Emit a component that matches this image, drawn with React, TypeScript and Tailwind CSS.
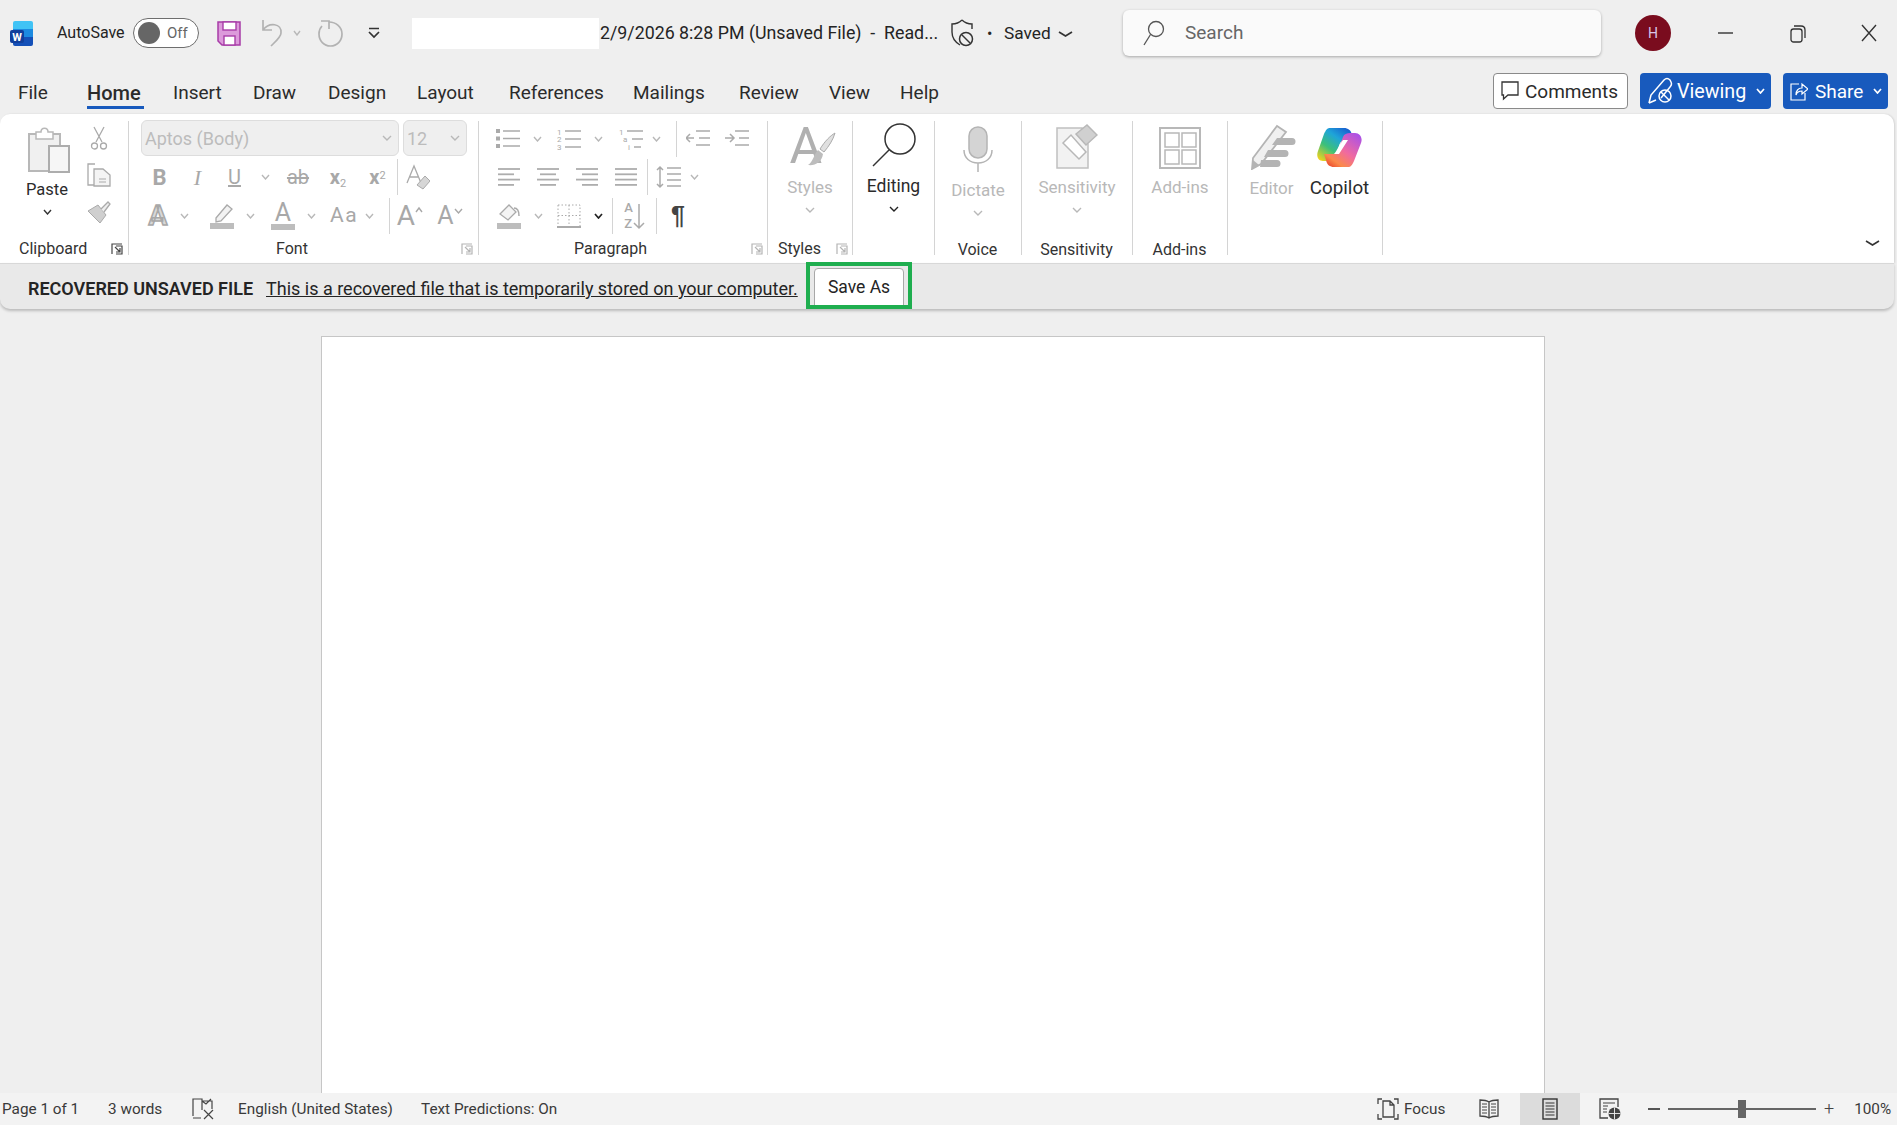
import React from "react";

const G = "#b4b4b4";

const S = ({ w, h, children, className = "" }: { w: number; h: number; children?: React.ReactNode; className?: string }) => (
  <svg width={w} height={h} viewBox={`0 0 ${w} ${h}`} fill="none" className={"block shrink-0 " + className}>
    {children}
  </svg>
);

const Chev = ({ c = "#b8b8b8", w = 10, sw = 1.4 }: { c?: string; w?: number; sw?: number }) => (
  <S w={w} h={6}>
    <path d={`M1 1 L${w / 2} 5 L${w - 1} 1`} stroke={c} strokeWidth={sw} />
  </S>
);

const Slot = ({ w, className = "", children }: { w: string; className?: string; children?: React.ReactNode }) => (
  <div className={"flex items-center justify-center shrink-0 h-full " + w + " " + className}>{children}</div>
);

const Sep = ({ className = "" }: { className?: string }) => <div className={"w-px h-[36px] bg-[#d4d4d4] shrink-0 " + className} />;

const Launcher = ({ c = G }: { c?: string }) => (
  <S w={12} h={12}>
    <path d="M1 11 V1 H11 M5 3 H11 V11 H5 M4 4 L9 9 M9 5 V9 H5" stroke={c} strokeWidth="1.2" />
  </S>
);

const Lines = ({ xs }: { xs: [number, number][] }) => (
  <S w={24} h={22}>
    {xs.map((a, i) => (
      <path key={i} d={`M${a[0]} ${3 + i * 5.3} H${a[1]}`} stroke="#adadad" strokeWidth="1.8" />
    ))}
  </S>
);

function WordLogo() {
  return (
    <S w={24} h={25}>
      <rect x="3" y="0" width="20" height="12" rx="2" fill="#41c3f5" />
      <rect x="3" y="8" width="20" height="9" fill="#1c8ae0" />
      <path d="M3 16 H23 V23 a2 2 0 0 1 -2 2 H5 a2 2 0 0 1 -2 -2Z" fill="#1450b8" />
      <rect x="0" y="9" width="14" height="13" rx="2" fill="#103f9c" />
      <text x="7" y="19.5" fontSize="11" fontWeight="700" textAnchor="middle" fill="#fff" fontFamily="Roboto">W</text>
    </S>
  );
}

function TitleBar() {
  return (
    <div className="h-[66px] flex items-center shrink-0 text-[#242424]">
      <div className="ml-[10px]"><WordLogo /></div>
      <span className="ml-[23px] text-[16px] w-[66px] whitespace-nowrap">AutoSave</span>
      <div className="ml-[10px] w-[66px] h-[30px] rounded-full border border-[#6e6e6e] bg-white flex items-center pl-[4px] gap-[7px]">
        <div className="w-[22px] h-[22px] rounded-full bg-[#666]" />
        <span className="text-[15px] text-[#666]">Off</span>
      </div>
      <div className="ml-[18px]">
        <S w={24} h={25}>
          <path d="M1 1 H23 V24 H5 L1 20Z" fill="#dc9adb" stroke="#a83ca8" strokeWidth="1.5" />
          <rect x="6" y="1" width="13" height="8" fill="#fff" stroke="#a83ca8" strokeWidth="1.4" />
          <rect x="7" y="15" width="11" height="9" fill="#fff" stroke="#a83ca8" strokeWidth="1.4" />
        </S>
      </div>
      <div className="ml-[20px]">
        <S w={22} h={28}>
          <path d="M2 1 V11 H11 M2 11 C8 3 21 4 20 14 C20 18 15 22 10 27" stroke="#b2b2b2" strokeWidth="1.7" />
        </S>
      </div>
      <div className="ml-[10px]"><Chev w={8} /></div>
      <div className="ml-[17px]">
        <S w={25} h={28}>
          <path d="M3 2 H11 V10" stroke="#b2b2b2" strokeWidth="1.7" />
          <path d="M11 3 C18 3 24 8 24 15 C24 22 19 27 12.500 27 C6 27 1 22 1 15 C1 12 2 9 4 7" stroke="#b2b2b2" strokeWidth="1.7" />
        </S>
      </div>
      <div className="ml-[24px]">
        <S w={14} h={12}>
          <path d="M2 1.500 H12" stroke="#333" strokeWidth="1.500" />
          <path d="M2 5 L7 10 L12 5" stroke="#333" strokeWidth="1.700" />
        </S>
      </div>
      <div className="ml-[31px] w-[187px] h-[31px] bg-white" />
      <span className="ml-[1px] w-[339px] text-[17.800px] whitespace-pre mt-[1px]">2/9/2026 8:28 PM (Unsaved File)  -  Read...</span>
      <div className="ml-[11px]">
        <S w={24} h={28}>
          <path d="M12 1 C9 4 5 5 2 5 V13 C2 19 5 23 10 26" stroke="#333" strokeWidth="1.400" />
          <path d="M12 1 C15 4 19 5 22 5 V10" stroke="#333" strokeWidth="1.400" />
          <circle cx="16" cy="20" r="6.500" stroke="#333" strokeWidth="1.500" />
          <path d="M12 16 L20 24" stroke="#333" strokeWidth="1.500" />
        </S>
      </div>
      <span className="ml-[13px] text-[16px] w-[7px] mt-[1px]">•</span>
      <span className="ml-[10px] text-[17.300px] w-[48px] mt-[2px]">Saved</span>
      <div className="ml-[6px] mt-[1px]"><Chev c="#333" w={15} sw={1.7} /></div>
      <div className="ml-[50px] w-[478px] h-[46px] rounded-md bg-[#fafafa] shadow-[0_1px_3px_rgba(0,0,0,0.3)] flex items-center pl-[20px]">
        <S w={22} h={26}>
          <circle cx="13" cy="9" r="7.500" stroke="#555" strokeWidth="1.300" />
          <path d="M7.500 14.500 L1 25" stroke="#555" strokeWidth="1.300" />
        </S>
        <span className="ml-[20px] text-[19px] text-[#666] mt-[1px]">Search</span>
      </div>
      <div className="ml-[34px] w-[36px] h-[36px] rounded-full bg-[#7a0c1e] text-[#d8c6e8] text-[14px] flex items-center justify-center">H</div>
      <div className="ml-[47px]"><S w={15} h={2}><path d="M0 1 H15" stroke="#333" strokeWidth="1.400" /></S></div>
      <div className="ml-[57px]">
        <S w={16} h={19}>
          <rect x="1" y="5" width="11" height="13" rx="2.500" stroke="#333" strokeWidth="1.300" />
          <path d="M4 2 H11 C13.500 2 15 3.500 15 6 V14" stroke="#333" strokeWidth="1.300" />
        </S>
      </div>
      <div className="ml-[55px]"><S w={16} h={18}><path d="M1 1 L15 17 M15 1 L1 17" stroke="#333" strokeWidth="1.400" /></S></div>
    </div>
  );
}

const tabs: [string, string, string][] = [
  ["File", "ml-[18px]", "w-[29px]"],
  ["Home", "ml-[40px]", "w-[57px]"],
  ["Insert", "ml-[29px]", "w-[47px]"],
  ["Draw", "ml-[33px]", "w-[44px]"],
  ["Design", "ml-[31px]", "w-[59px]"],
  ["Layout", "ml-[30px]", "w-[59px]"],
  ["References", "ml-[33px]", "w-[92px]"],
  ["Mailings", "ml-[32px]", "w-[74px]"],
  ["Review", "ml-[32px]", "w-[59px]"],
  ["View", "ml-[31px]", "w-[41px]"],
  ["Help", "ml-[30px]", "w-[40px]"],
];

function TabRow() {
  return (
    <div className="h-[48px] shrink-0 flex items-start pt-[7px]">
      <div className="flex items-start mt-[8px]">
        {tabs.map(([t, m, w]) => (
          <div
            key={t}
            className={
              m + " " + w +
              " h-[28px] leading-[24px] text-[#2b2b2b] whitespace-nowrap box-border border-b-[3px] " +
              (t === "Home" ? "border-[#185abd] font-medium text-[20px]" : "border-transparent text-[19px]")
            }
          >
            {t}
          </div>
        ))}
      </div>
      <div className="ml-auto flex mr-[9px] gap-[12px]">
        <div className="h-[36px] w-[135px] rounded-[4px] border border-[#8a8a8a] bg-white flex items-center pl-[7px] gap-[6px] text-[19px] text-[#2b2b2b]">
          <S w={18} h={20}>
            <path d="M1 1 H17 V14 H7 L2.500 18 V14 H1Z" stroke="#333" strokeWidth="1.300" />
          </S>
          <span className="mt-[2px]">Comments</span>
        </div>
        <div className="h-[36px] w-[131px] rounded-[4px] bg-[#185abd] flex items-center pl-[7px] text-[19.700px] text-white">
          <S w={28} h={28}>
            <path d="M2 26 L4 18 L17 3 C19 1 21 1 23 3 L24 5 C25 7 24 9 23 10 L14 21" stroke="#fff" strokeWidth="1.500" />
            <path d="M2 26 L9 23" stroke="#fff" strokeWidth="1.500" />
            <circle cx="18" cy="19" r="6" stroke="#fff" strokeWidth="1.500" />
            <path d="M14 15 L22 23" stroke="#fff" strokeWidth="1.500" />
          </S>
          <span className="ml-[2px] w-[69px] mt-[2px]">Viewing</span>
          <div className="ml-[10px]"><Chev c="#fff" w={9} sw={1.7} /></div>
        </div>
        <div className="h-[36px] w-[105px] rounded-[4px] bg-[#185abd] flex items-center pl-[7px] text-[19px] text-white">
          <S w={18} h={20}>
            <path d="M9 3 H1 V19 H15 V12" stroke="#fff" strokeWidth="1.200" />
            <path d="M6 14 C6 9 9 7 12 7 V3 L18 8 L12 13 V10 C9 10 7 11 6 14Z" stroke="#fff" strokeWidth="1.200" />
          </S>
          <span className="ml-[7px] w-[50px] mt-[2px]">Share</span>
          <div className="ml-[8px]"><Chev c="#fff" w={9} sw={1.7} /></div>
        </div>
      </div>
    </div>
  );
}

const Group = ({ w, label, launcher, lc, children, labelClass = "" }: { w: string; label?: string; launcher?: string; lc?: string; children: React.ReactNode; labelClass?: string }) => (
  <div className={"h-[134px] border-r border-[#d4d4d4] flex flex-col shrink-0 box-border " + w}>
    <div className="flex-1 min-h-0">{children}</div>
    {label && (
      <div className={"h-[14px] leading-[14px] flex items-center text-[16px] text-[#333] whitespace-nowrap translate-y-[1px] " + labelClass}>
        <span>{label}</span>
        {launcher && <div className={launcher}><Launcher c={lc} /></div>}
      </div>
    )}
  </div>
);

const Dim = "text-[#b8b8b8]";

function Clipboard() {
  return (
    <Group w="w-[129px]" label="Clipboard" launcher="ml-[24px]" lc="#444" labelClass="pl-[19px]">
      <div className="flex">
        <div className="w-[94px] flex flex-col items-center pt-[6px]">
          <div className="pl-[4px]">
            <S w={42} h={46}>
              <rect x="1" y="7" width="31" height="37" fill="#f0f0f0" stroke="#b8b8b8" strokeWidth="2" />
              <path d="M8 12 V5 H13 C13 0 20 0 20 5 H25 V12Z" fill="#fff" stroke="#b8b8b8" strokeWidth="1.500" />
              <rect x="21" y="19" width="20" height="26" fill="#f6f6f6" stroke="#adadad" strokeWidth="2" />
            </S>
          </div>
          <span className="text-[16.500px] leading-[22px] mt-[6px] text-[#2b2b2b]">Paste</span>
          <div className="mt-[8px]"><Chev c="#333" w={9} /></div>
        </div>
        <div className="w-[24px] -ml-[7px] flex flex-col items-center pt-[5px] gap-[13px]">
          <S w={18} h={24}>
            <path d="M4 1 L12 16 M14 1 L6 16" stroke="#aaa" strokeWidth="1.300" />
            <circle cx="4.500" cy="20" r="3" stroke="#aaa" strokeWidth="1.300" />
            <circle cx="13.500" cy="20" r="3" stroke="#aaa" strokeWidth="1.300" />
          </S>
          <S w={24} h={24}>
            <path d="M8 22 H1 V1 H8" stroke="#aaa" strokeWidth="1.300" />
            <path d="M7 6 H16 L23 12 V23 H7Z" fill="#f4f4f4" stroke="#aaa" strokeWidth="1.300" />
            <path d="M12 16 H19 M12 19 H19" stroke="#aaa" strokeWidth="1" />
          </S>
          <S w={24} h={24}>
            <path d="M1 11 L11 5 L19 15 L13 23Z" fill="#cfcfcf" stroke="#aaa" />
            <path d="M14 9 L21 2 L23 4 L17 12" fill="#eee" stroke="#aaa" strokeWidth="1.300" />
          </S>
        </div>
      </div>
    </Group>
  );
}

const Drop = ({ w, t, cls }: { w: string; t: string; cls: string }) => (
  <div className={"h-[36px] rounded-[6px] border border-[#dddddd] bg-[#efefef] flex items-center justify-between box-border " + w + " " + cls}>
    <span className="text-[18px] text-[#bcbcbc] whitespace-nowrap">{t}</span>
    <Chev w={10} />
  </div>
);

function Font() {
  return (
    <Group w="w-[350px]" label="Font" launcher="ml-[153px]" labelClass="pl-[147px]">
      <div className="pl-[12px]">
        <div className="flex h-[36px] gap-[4px] -mt-[1px]">
          <Drop w="w-[258px]" t="Aptos (Body)" cls="pl-[3px] pr-[6px]" />
          <Drop w="w-[64px]" t="12" cls="pl-[3px] pr-[6px]" />
        </div>
        <div className="flex items-center h-[38px] mt-[2px]">
          <Slot w="w-[37px]"><span className="text-[22px] font-bold text-[#a8a8a8]">B</span></Slot>
          <Slot w="w-[39px]"><span className="text-[22px] italic text-[#a8a8a8] [font-family:'Liberation_Serif',serif]">I</span></Slot>
          <Slot w="w-[35px]"><span className="text-[20px] underline text-[#a8a8a8]">U</span></Slot>
          <Slot w="w-[26px]"><Chev w={9} /></Slot>
          <Slot w="w-[40px]"><span className="text-[20px] line-through text-[#a8a8a8]">ab</span></Slot>
          <Slot w="w-[40px]"><span className="text-[20px] font-bold text-[#a8a8a8]">x<sub className="text-[11px] font-normal">2</sub></span></Slot>
          <Slot w="w-[39px]"><span className="text-[20px] font-bold text-[#a8a8a8]">x<sup className="text-[11px] font-normal">2</sup></span></Slot>
          <Sep />
          <Slot w="w-[40px]">
            <S w={24} h={26}>
              <path d="M1 19 L8 2 L15 19 M4 13 H12" stroke="#aaa" strokeWidth="1.300" />
              <path d="M11 21 L19 12 L24 17 L17 25Z" fill="#d6d6d6" stroke="#aaa" />
            </S>
          </Slot>
        </div>
        <div className="flex items-center h-[38px] mt-[1px]">
          <Slot w="w-[34px]"><span className="text-[28px] font-bold text-[#d8d8d8] [-webkit-text-stroke:1.500px_#a8a8a8]">A</span></Slot>
          <Slot w="w-[18px]"><Chev w={9} /></Slot>
          <Slot w="w-[40px]" className="ml-[9px]">
            <S w={24} h={26}>
              <path d="M6 15 L17 2 L22 6 L11 18 L6 19Z" fill="#f2f2f2" stroke="#aaa" strokeWidth="1.300" />
              <rect x="0" y="20" width="24" height="6" fill="#bdbdbd" />
            </S>
          </Slot>
          <Slot w="w-[16px]"><Chev w={9} /></Slot>
          <Slot w="w-[40px]" className="ml-[5px] flex-col">
            <span className="text-[25px] leading-[22px] text-[#a8a8a8]">A</span>
            <div className="w-[24px] h-[6px] bg-[#bdbdbd]" />
          </Slot>
          <Slot w="w-[16px]"><Chev w={9} /></Slot>
          <Slot w="w-[36px]" className="ml-[7px]"><span className="text-[21px] text-[#a8a8a8] tracking-[1.500px]">Aa</span></Slot>
          <Slot w="w-[14px]"><Chev w={9} /></Slot>
          <div className="ml-[13px]"><Sep /></div>
          <Slot w="w-[40px]">
            <span className="text-[28px] leading-[30px] text-[#a8a8a8]">A</span>
            <S w={8} h={22}><path d="M1 7 L4 3 L7 7" stroke="#a8a8a8" strokeWidth="1.400" /></S>
          </Slot>
          <Slot w="w-[40px]">
            <span className="text-[25px] leading-[30px] text-[#a8a8a8]">A</span>
            <S w={9} h={22}><path d="M1 4 L4.500 8 L8 4" stroke="#a8a8a8" strokeWidth="1.400" /></S>
          </Slot>
        </div>
      </div>
    </Group>
  );
}

function Paragraph() {
  return (
    <Group w="w-[289px]" label="Paragraph" launcher="ml-[104px]" labelClass="pl-[95px]">
      <div className="pl-[10px]">
        <div className="flex items-center h-[36px]">
          <Slot w="w-[38px]">
            <S w={24} h={22}>
              {[3, 10.500, 18].map((y) => (
                <g key={y}>
                  <rect x="0" y={y - 2} width="4" height="4" fill="#aaa" />
                  <path d={`M7 ${y} H24`} stroke="#aaa" strokeWidth="1.500" />
                </g>
              ))}
            </S>
          </Slot>
          <Slot w="w-[20px]"><Chev w={9} /></Slot>
          <Slot w="w-[38px]" className="ml-[3px]">
            <S w={24} h={24}>
              <text x="0" y="8" fontSize="8" fill="#aaa" fontFamily="Roboto">1</text>
              <text x="0" y="15" fontSize="8" fill="#aaa" fontFamily="Roboto">2</text>
              <text x="0" y="23" fontSize="8" fill="#aaa" fontFamily="Roboto">3</text>
              <path d="M8 4 H24 M8 12 H24 M8 20 H24" stroke="#aaa" strokeWidth="1.500" />
            </S>
          </Slot>
          <Slot w="w-[20px]"><Chev w={9} /></Slot>
          <Slot w="w-[36px]" className="ml-[5px]">
            <S w={24} h={24}>
              <text x="0" y="8" fontSize="8" fill="#aaa" fontFamily="Roboto">1</text>
              <text x="4" y="15" fontSize="8" fill="#aaa" fontFamily="Roboto">a</text>
              <text x="9" y="23" fontSize="8" fill="#aaa" fontFamily="Roboto">i</text>
              <path d="M8 4 H24 M13 12 H24 M15 20 H22" stroke="#aaa" strokeWidth="1.500" />
            </S>
          </Slot>
          <Slot w="w-[14px]"><Chev w={9} /></Slot>
          <div className="ml-[13px]"><Sep /></div>
          <Slot w="w-[42px]">
            <S w={24} h={22}>
              <path d="M10 3 H24 M13 10 H24 M10 17 H24 M8 10 H0 M4 6 L0 10 L4 14" stroke="#aaa" strokeWidth="1.500" />
            </S>
          </Slot>
          <Slot w="w-[36px]">
            <S w={24} h={22}>
              <path d="M10 3 H24 M14 10 H24 M10 17 H24 M0 10 H9 M5 6 L9 10 L5 14" stroke="#aaa" strokeWidth="1.500" />
            </S>
          </Slot>
        </div>
        <div className="flex items-center h-[38px] mt-[1px]">
          <Slot w="w-[39px]"><Lines xs={[[1, 23], [1, 17], [1, 23], [1, 17]]} /></Slot>
          <Slot w="w-[39px]"><Lines xs={[[1, 23], [4, 20], [1, 23], [4, 20]]} /></Slot>
          <Slot w="w-[39px]"><Lines xs={[[1, 23], [7, 23], [1, 23], [7, 23]]} /></Slot>
          <Slot w="w-[39px]"><Lines xs={[[1, 23], [1, 23], [1, 23], [1, 23]]} /></Slot>
          <div className="ml-[2px]"><Sep /></div>
          <Slot w="w-[42px]">
            <S w={26} h={24}>
              <path d="M4 2 V22 M1 5 L4 2 L7 5 M1 19 L4 22 L7 19 M11 3 H25 M11 9 H25 M11 15 H25 M11 21 H25" stroke="#aaa" strokeWidth="1.500" />
            </S>
          </Slot>
          <Slot w="w-[8px]"><Chev w={9} /></Slot>
        </div>
        <div className="flex items-center h-[38px] mt-[1px]">
          <Slot w="w-[40px]">
            <S w={24} h={26}>
              <path d="M3 11 L12 2 L19 9 L11 17Z" fill="#f4f4f4" stroke="#aaa" strokeWidth="1.300" />
              <path d="M17 5 C21 5 22 9 22 13" stroke="#aaa" strokeWidth="1.500" />
              <rect x="0" y="20" width="24" height="6" fill="#bdbdbd" />
            </S>
          </Slot>
          <Slot w="w-[18px]"><Chev w={9} /></Slot>
          <Slot w="w-[40px]" className="ml-[2px]">
            <S w={24} h={24}>
              <path d="M1 1 H23 V22 M1 1 V22 M1 11.500 H23 M12 1 V22" stroke="#aaa" strokeWidth="1" strokeDasharray="1.500 2" />
              <path d="M0 23 H24" stroke="#aaa" strokeWidth="2" />
            </S>
          </Slot>
          <Slot w="w-[18px]"><Chev c="#222" w={9} sw={1.7} /></Slot>
          <div className="ml-[5px]"><Sep /></div>
          <Slot w="w-[43px]">
            <span className="flex items-center text-[#aaa]">
              <span className="flex flex-col text-[13px] leading-[16px] font-medium"><span>A</span><span>Z</span></span>
              <S w={12} h={28}><path d="M6 2 V26 M1 21 L6 26 L11 21" stroke="#aaa" strokeWidth="1.500" /></S>
            </span>
          </Slot>
          <Sep />
          <Slot w="w-[42px]"><span className="text-[25px] font-bold text-[#444] [font-family:'Liberation_Sans',sans-serif]">¶</span></Slot>
        </div>
      </div>
    </Group>
  );
}

const BigTool = ({ w, icon, label, dim = true, chev, iconBox = "h-[48px]", top = "pt-[3px]", gap = "mt-[5px]", size = "text-[17px]" }: { w: string; icon: React.ReactNode; label: string; dim?: boolean; chev?: string; iconBox?: string; top?: string; gap?: string; size?: string }) => (
  <div className={"flex flex-col items-center " + w + " " + top}>
    <div className={"flex items-center justify-center " + iconBox}>{icon}</div>
    <span className={"leading-[22px] whitespace-nowrap " + size + " " + gap + " " + (dim ? Dim : "text-[#2b2b2b]")}>{label}</span>
    {chev && <div className="mt-[9px]"><Chev c={chev} w={10} /></div>}
  </div>
);

function Copilot() {
  return (
    <S w={45} h={41}>
      <defs>
        <linearGradient id="cpa" x1="0.9" y1="0" x2="0.1" y2="1">
          <stop offset="0" stopColor="#1553cf" />
          <stop offset="0.35" stopColor="#1fa5d8" />
          <stop offset="0.65" stopColor="#3cc07a" />
          <stop offset="1" stopColor="#f5d31c" />
        </linearGradient>
        <linearGradient id="cpb" x1="0.9" y1="0" x2="0.1" y2="1">
          <stop offset="0" stopColor="#a850ea" />
          <stop offset="0.5" stopColor="#f06aa0" />
          <stop offset="0.8" stopColor="#fb8a4a" />
          <stop offset="1" stopColor="#e8402a" />
        </linearGradient>
      </defs>
      <path d="M13 1 H27 C31 1 34 3 35 8 L37 13 H29 C25 13 23 15 22 19 L18 30 C17 33 14 34 11 34 H6 C1 34 -1 29 1 24 L7 7 C9 3 10 1 13 1Z" fill="url(#cpa)" />
      <path d="M31 40 H17 C13 40 10 38 9 33 L7 27 H15 C19 27 21 25 22 21 L26 10 C27 7 30 6 33 6 H38 C43 6 46 11 44 16 L37 34 C35 38 34 40 31 40Z" fill="url(#cpb)" />
      <path d="M26 13 L31 13 L22 27 L17 27 C20 24 22 18 26 13Z" fill="#fff" />
    </S>
  );
}

function StylesIcon() {
  return (
    <div className="relative w-[46px] h-[46px]">
      <span className="block h-[46px] leading-[44px] text-[50px] text-[#b0b0b0]">A</span>
      <div className="absolute inset-0">
        <S w={46} h={46}>
          <path d="M45 9 C40 12 35 17 30 25 L34 28 C39 22 43 16 45 9Z" fill="#e0e0e0" stroke="#aaa" />
          <path d="M18 41 C25 42 32 38 33 30 L28 26 C24 30 23 38 18 41Z" fill="#bdbdbd" />
        </S>
      </div>
    </div>
  );
}

function Ribbon() {
  return (
    <div className="h-[149px] w-[1894px] shrink-0 bg-white rounded-t-[10px] flex pt-[7px] shadow-[1px_0_2px_rgba(0,0,0,0.12)]">
      <Clipboard />
      <Font />
      <Paragraph />
      <Group w="w-[85px]" label="Styles" launcher="ml-[15px]" labelClass="pl-[10px]">
        <BigTool w="w-[84px]" chev="#b8b8b8" gap="mt-[6px]" iconBox="h-[46px] pl-[5px]" icon={<StylesIcon />} label="Styles" />
      </Group>
      <Group w="w-[82px]">
        <BigTool
          w="w-[81px]"
          dim={false}
          chev="#222"
          top="pt-[2px]"
          gap="mt-[9px]"
          size="text-[17.500px]"
          iconBox="h-[43px] pl-[2px]"
          icon={
            <S w={46} h={46}>
              <circle cx="28" cy="17" r="15" fill="#fff" stroke="#333" strokeWidth="1.500" />
              <path d="M17 28 L1 44" stroke="#333" strokeWidth="1.500" />
            </S>
          }
          label="Editing"
        />
      </Group>
      <Group w="w-[87px]" label="Voice" labelClass="justify-center pr-[1px] translate-y-[2px]">
        <BigTool
          w="w-[86px]"
          chev="#b8b8b8"
          top="pt-[5px]"
          gap="mt-[7px]"
          iconBox="h-[46px]"
          icon={
            <S w={30} h={46}>
              <rect x="6" y="1" width="18" height="31" rx="9" fill="#d4d4d4" stroke="#b4b4b4" strokeWidth="1.500" />
              <path d="M1 24 C1 32 7 37 15 37 C23 37 29 32 29 24 M15 37 V46" stroke="#b4b4b4" strokeWidth="1.500" />
            </S>
          }
          label="Dictate"
        />
      </Group>
      <Group w="w-[111px]" label="Sensitivity" labelClass="justify-center pr-[1px] translate-y-[2px]">
        <BigTool
          w="w-[110px]"
          chev="#b8b8b8"
          top="pt-[2px]"
          iconBox="h-[48px]"
          icon={
            <S w={42} h={46}>
              <path d="M1 4 H26 V14 L32 20 V44 H1Z" fill="#f2f2f2" stroke="#c0c0c0" strokeWidth="1.500" />
              <path d="M7 19 L15 11 L30 28 L23 35Z" fill="#fff" stroke="#b8b8b8" strokeWidth="1.500" />
              <path d="M20 10 L31 1 L41 11 L30 21Z" fill="#d0d0d0" stroke="#b8b8b8" strokeWidth="1.500" />
            </S>
          }
          label="Sensitivity"
        />
      </Group>
      <Group w="w-[95px]" label="Add-ins" labelClass="justify-center pr-[1px] translate-y-[2px]">
        <BigTool
          w="w-[94px]"
          top="pt-[5px]"
          gap="mt-[7px]"
          iconBox="h-[43px]"
          icon={
            <S w={42} h={42}>
              <rect x="1" y="1" width="40" height="40" stroke="#b8b8b8" strokeWidth="2" />
              <rect x="6" y="6" width="14" height="14" stroke="#b8b8b8" strokeWidth="1.500" />
              <rect x="23" y="6" width="14" height="14" stroke="#b8b8b8" strokeWidth="1.500" />
              <rect x="6" y="23" width="14" height="14" stroke="#b8b8b8" strokeWidth="1.500" />
              <rect x="23" y="23" width="14" height="14" stroke="#b8b8b8" strokeWidth="1.500" />
            </S>
          }
          label="Add-ins"
        />
      </Group>
      <Group w="w-[155px]">
        <div className="flex">
          <BigTool
            w="w-[87px]"
            top="pt-[3px]"
            gap="mt-[7px]"
            iconBox="h-[46px] pl-[4px]"
            icon={
              <S w={46} h={46}>
                <path d="M1 45 L2 34 L26 2 L35 8 L10 40Z" fill="#f0f0f0" stroke="#b4b4b4" strokeWidth="1.800" />
                <path d="M1 45 L2 36 L8 41Z" fill="#b4b4b4" />
                <path d="M26 14 H41 a3.500 3.500 0 0 1 0 7 H21Z M17 26 H34 a3.500 3.500 0 0 1 0 7 H13Z M10 36 H26 a3.500 3.500 0 0 1 0 7 H9Z" fill="#b4b4b4" />
              </S>
            }
            label="Editor"
          />
          <BigTool w="w-[49px]" dim={false} top="pt-[3px]" gap="mt-[7px]" size="text-[18.800px]" iconBox="h-[46px]" icon={<Copilot />} label="Copilot" />
        </div>
      </Group>
      <div className="ml-auto self-end mb-[17px] mr-[14px]"><Chev c="#333" w={15} sw={1.6} /></div>
    </div>
  );
}

function MessageBar() {
  return (
    <div className="h-[46px] w-[1894px] shrink-0 bg-[#e9e9e9] border-t border-[#d8d8d8] rounded-b-[10px] shadow-[0_2px_3px_rgba(0,0,0,0.22)] flex items-center pl-[28px] text-[18px] text-[#242424] box-border relative z-10">
      <span className="font-semibold whitespace-nowrap w-[238px] mt-[4px]">RECOVERED UNSAVED FILE</span>
      <span className="underline whitespace-nowrap w-[540px] mt-[4px]">This is a recovered file that is temporarily stored on your computer.</span>
      <div className="w-[106px] h-[47px] -mt-[2px] border-[4px] border-[#1fae4f] box-border overflow-hidden flex justify-center pt-[2px]">
        <div className="w-[90px] h-[44px] bg-white border border-[#a8a8a8] rounded-t-[4px] flex justify-center pt-[7px] leading-[22px] text-[17.500px]">Save As</div>
      </div>
    </div>
  );
}

function Doc() {
  return (
    <div className="flex-1 min-h-0 pl-[321px] pt-[27px] overflow-hidden">
      <div className="w-[1224px] h-full bg-white border-x border-t border-[#c6c6c6] box-border" />
    </div>
  );
}

function StatusBar() {
  const I = "#444";
  return (
    <div className="h-[32px] shrink-0 bg-[#f3f3f3] flex items-center text-[15.300px] text-[#3a3a3a] whitespace-nowrap">
      <span className="ml-[2px] w-[75px]">Page 1 of 1</span>
      <span className="ml-[31px] w-[55px]">3 words</span>
      <div className="ml-[29px]">
        <S w={22} h={22}>
          <path d="M1 18 V1 H10 V12 M10 3 H20 V11 M10 3 L14 6 L19 1" stroke={I} strokeWidth="1.200" />
          <path d="M1 20 H9 M12 12 L21 21 M21 12 L12 21" stroke={I} strokeWidth="1.200" />
        </S>
      </div>
      <span className="ml-[24px] w-[154px]">English (United States)</span>
      <span className="ml-[29px] w-[135px]">Text Predictions: On</span>
      <div className="ml-[821px]">
        <S w={22} h={22}>
          <path d="M1 6 V1 H5 M17 1 H21 V6 M1 16 V21 H5 M17 21 H21 V16" stroke={I} strokeWidth="1.300" />
          <path d="M6 3 H13 L17 7 V19 H6Z M13 3 V7 H17" stroke={I} strokeWidth="1.300" />
        </S>
      </div>
      <span className="ml-[5px] w-[38px]">Focus</span>
      <div className="ml-[37px]">
        <S w={20} h={22}>
          <path d="M10 4 C7 2 4 2 1 2 V18 C4 18 7 18 10 20 C13 18 16 18 19 18 V2 C16 2 13 2 10 4Z M10 4 V20" stroke={I} strokeWidth="1.300" />
          <path d="M3 6 H8 M3 9 H8 M3 12 H8 M3 15 H8 M12 6 H17 M12 9 H17 M12 12 H17 M12 15 H17" stroke={I} strokeWidth="1" />
        </S>
      </div>
      <div className="ml-[21px] w-[60px] h-full bg-[#dcdcdc] flex items-center justify-center">
        <S w={16} h={22}>
          <rect x="1" y="1" width="14" height="20" stroke="#333" strokeWidth="1.400" />
          <path d="M3.500 5 H12.500 M3.500 8 H12.500 M3.500 11 H12.500 M3.500 14 H12.500 M3.500 17 H12.500" stroke="#333" strokeWidth="1.200" />
        </S>
      </div>
      <div className="ml-[19px]">
        <S w={22} h={22}>
          <path d="M9 20 H1 V1 H19 V9" stroke={I} strokeWidth="1.300" />
          <path d="M4 5 H16 M4 8 H9 M4 11 H8 M4 14 H8 M12 5 H16" stroke={I} strokeWidth="1.200" />
          <circle cx="15.500" cy="15.500" r="6" fill="#444" />
          <path d="M9.500 15.500 H21.500 M15.500 9.500 V21.500" stroke="#f3f3f3" strokeWidth="0.900" />
        </S>
      </div>
      <div className="ml-[27px] w-[12px] h-[1.500px] bg-[#555]" />
      <div className="ml-[8px] w-[148px] h-[2px] bg-[#666] flex justify-center items-center">
        <div className="w-[8px] h-[18px] bg-[#666]" />
      </div>
      <span className="ml-[8px] text-[18px] font-light text-[#444] leading-none">+</span>
      <span className="ml-[20px] w-[40px]">100%</span>
    </div>
  );
}

export default function App() {
  return (
    <div className="w-[1897px] h-[1125px] overflow-hidden flex flex-col bg-[#efefef] [font-family:Roboto,'Noto_Sans',sans-serif]">
      <TitleBar />
      <TabRow />
      <Ribbon />
      <MessageBar />
      <Doc />
      <StatusBar />
    </div>
  );
}
